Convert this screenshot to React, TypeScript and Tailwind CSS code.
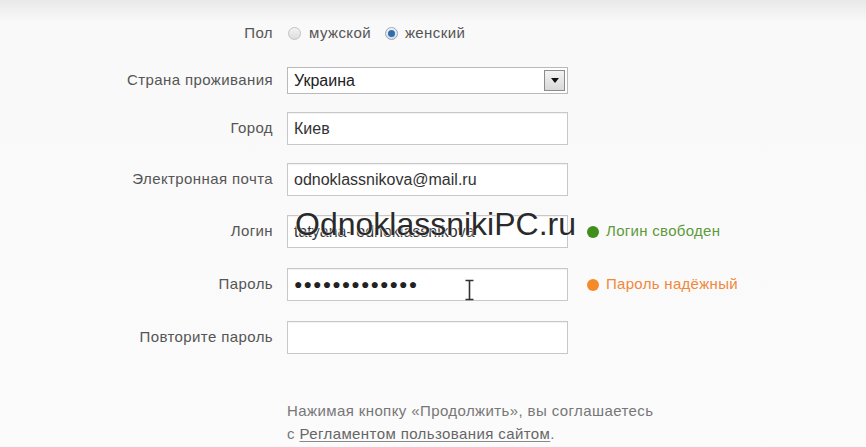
import React from "react";

const font = { fontFamily: '"Liberation Sans", Arial, sans-serif' };

function Row({ label, children, extra, className = "" }: { label: string; children: React.ReactNode; extra?: React.ReactNode; className?: string }) {
  return (
    <div className={`flex items-center ${className}`}>
      <div className="w-[273px] text-right text-[15px] tracking-[0.4px] text-[#555]">{label}</div>
      <div className="ml-[14px] flex items-center">{children}</div>
      {extra}
    </div>
  );
}

function TextBox({ value, password }: { value?: string; password?: boolean }) {
  return (
    <div className="flex h-[33px] w-[281px] items-center border border-[#c8c8c8] bg-white px-[6px] text-[16px] text-[#333] shadow-[inset_0_1px_1px_rgba(0,0,0,0.06)]">
      {password ? <span className="text-[14px] tracking-[1.1px] text-[#222]">{value}</span> : value}
    </div>
  );
}

function Status({ color, text, textColor }: { color: string; text: string; textColor: string }) {
  return (
    <div className="ml-[19px] flex items-center gap-[7px] text-[15px] tracking-[0.3px]">
      <span className={`h-[12px] w-[12px] rounded-full ${color}`} />
      <span className={textColor}>{text}</span>
    </div>
  );
}

export default function App() {
  return (
    <div className="relative h-[447px] w-[866px] overflow-hidden bg-gradient-to-b from-[#e9e9e9] via-[#f9f9f9] via-[5%] to-[#fbfbfb]" style={font}>
      <div className="pt-[24px]">
        <Row label="Пол" className="h-[18px]">
          <div className="flex items-center text-[15px] tracking-[0.4px] text-[#555]">
            <span className="ml-[1px] h-[13px] w-[13px] rounded-full border border-[#c2c2c2] bg-gradient-to-b from-[#f4f4f4] to-[#dcdcdc]" />
            <span className="ml-[8px]">мужской</span>
            <span className="ml-[14px] flex h-[13px] w-[13px] items-center justify-center rounded-full border border-[#9aa7b6] bg-gradient-to-b from-[#f2f4f7] to-[#d7dde4]">
              <span className="h-[7px] w-[7px] rounded-full bg-[#2d6db0]" />
            </span>
            <span className="ml-[7px]">женский</span>
          </div>
        </Row>

        <Row label="Страна проживания" className="mt-[25px]">
          <div className="flex h-[27px] w-[281px] items-center justify-between border border-[#b9b9b9] bg-white pl-[6px] pr-[2px] text-[16px] text-[#222]">
            <span>Украина</span>
            <span className="flex h-[21px] w-[21px] items-center justify-center border border-[#8c8c8c] bg-gradient-to-b from-[#f3f3f3] to-[#d9d9d9]">
              <svg width="8" height="5" viewBox="0 0 8 5"><path d="M0 0h8L4 5z" fill="#111" /></svg>
            </span>
          </div>
        </Row>

        <Row label="Город" className="mt-[18px]">
          <TextBox value="Киев" />
        </Row>

        <Row label="Электронная почта" className="mt-[18px]">
          <TextBox value="odnoklassnikova@mail.ru" />
        </Row>

        <Row
          label="Логин"
          className="mt-[19px]"
          extra={<Status color="bg-[#3f8f1d]" text="Логин свободен" textColor="text-[#5d9a3a]" />}
        >
          <TextBox value="tatyana- odnoklassnikova" />
        </Row>

        <Row
          label="Пароль"
          className="mt-[20px]"
          extra={<Status color="bg-[#f58a2a]" text="Пароль надёжный" textColor="text-[#f0883c]" />}
        >
          <TextBox value="●●●●●●●●●●●●●" password />
        </Row>

        <Row label="Повторите пароль" className="mt-[20px]">
          <TextBox />
        </Row>

        <div className="ml-[287px] mt-[45px] text-[15px] tracking-[0.4px] leading-[23px] text-[#777]">
          <div>Нажимая кнопку «Продолжить», вы соглашаетесь</div>
          <div>
            с <span className="underline decoration-[#888] underline-offset-2 text-[#666]">Регламентом пользования сайтом</span>.
          </div>
        </div>
      </div>

      {/* watermark */}
      <div className="absolute left-[295px] top-[208px] text-[32px] leading-none text-[#2a2a2a] [text-shadow:0_0_2px_#fff,0_0_2px_#fff]">
        OdnoklassnikiPC.ru
      </div>

      {/* text cursor */}
      <svg className="absolute left-[464px] top-[279px]" width="11" height="22" viewBox="0 0 11 22">
        <path d="M1.5 1.5h8M5.5 1.5v19M1.5 20.5h8" stroke="#333" strokeWidth="1.6" fill="none" />
      </svg>
    </div>
  );
}
